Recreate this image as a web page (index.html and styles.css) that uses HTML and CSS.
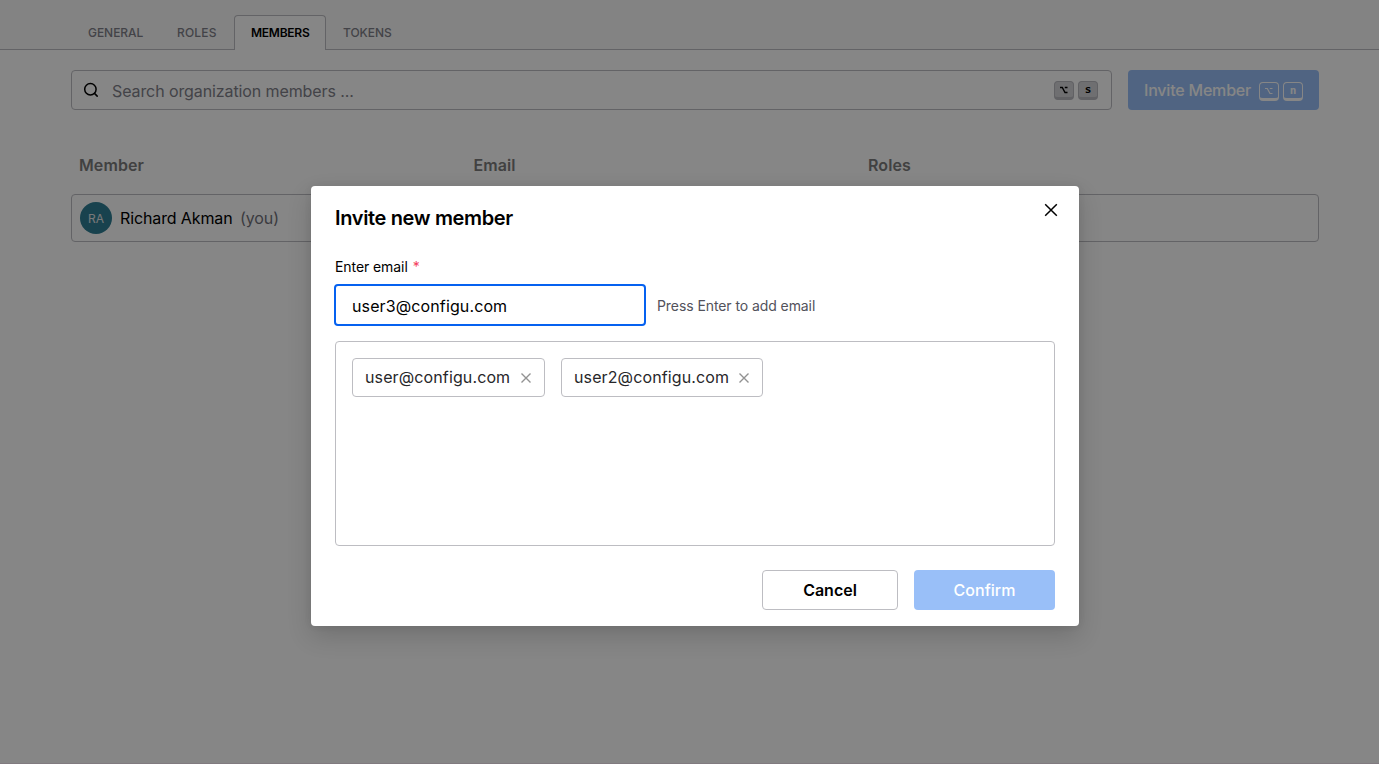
FILE: index.html
```html
<!DOCTYPE html>
<html lang="en">
<head>
  <title>Organization members</title>
  <meta charset="UTF-8">
  <meta name="viewport" content="width=device-width, initial-scale=1.0">
  <link rel="stylesheet" href="styles.css">
</head>
<body>
  <div class="page">
    <nav class="tabs">
      <a class="tab tab-general"><span>GENERAL</span></a>
      <a class="tab tab-roles"><span>ROLES</span></a>
      <a class="tab active"><span>MEMBERS</span></a>
      <a class="tab tab-tokens"><span>TOKENS</span></a>
    </nav>

    <main class="content">
      <div class="toolbar">
        <div class="search">
          <svg class="search-icon" width="16" height="16" viewBox="0 0 16 16" fill="none" stroke="#000" stroke-width="1.5" stroke-linecap="round">
            <circle cx="7.4" cy="7.2" r="5.7"/>
            <path d="M11.5 11.4L14.2 14.1"/>
          </svg>
          <span class="search-text">Search organization members ...</span>
          <kbd class="key">
            <svg width="10" height="10" viewBox="0 0 10 10" fill="none" stroke="currentColor" stroke-width="1.4"><path d="M1 2.500h2.300l2.700 5H8.500M5.800 2.500h2.700"/></svg>
          </kbd>
          <kbd class="key">s</kbd>
        </div>
        <div class="btn invite">
          <span class="invite-text">Invite Member</span>
          <kbd class="key key-light">
            <svg width="10" height="10" viewBox="0 0 10 10" fill="none" stroke="currentColor" stroke-width="1.2"><path d="M1 2.500h2.300l2.700 5H8.500M5.800 2.500h2.700"/></svg>
          </kbd>
          <kbd class="key key-light">n</kbd>
        </div>
      </div>

      <div class="table-head">
        <span>Member</span>
        <span>Email</span>
        <span>Roles</span>
      </div>
      <div class="row">
        <div class="avatar">RA</div>
        <span class="name">Richard Akman</span>
        <span class="you">(you)</span>
      </div>
    </main>
  </div>

  <div class="overlay">
    <section class="modal">
      <header class="modal-header">
        <h2>Invite new member</h2>
        <svg class="close" width="14" height="14" viewBox="0 0 14 14" fill="none" stroke="#000" stroke-width="1.5"><path d="M1.2 1.2l11.6 11.6M12.8 1.2L1.2 12.8"/></svg>
      </header>

      <div class="label"><span class="label-text">Enter email</span><span class="required">*</span></div>
      <div class="field">
        <div class="input"><span class="email">user3@configu.com</span></div>
        <span class="hint">Press Enter to add email</span>
      </div>

      <div class="chips">
        <div class="chip">
          <span class="email">user@configu.com</span>
          <svg width="10" height="10" viewBox="0 0 10 10" fill="none" stroke="#929292" stroke-width="1.4"><path d="M.5.5l9 9M9.500.5l-9 9"/></svg>
        </div>
        <div class="chip chip-wide">
          <span class="email">user2@configu.com</span>
          <svg width="10" height="10" viewBox="0 0 10 10" fill="none" stroke="#929292" stroke-width="1.4"><path d="M.5.5l9 9M9.500.5l-9 9"/></svg>
        </div>
      </div>

      <footer class="actions">
        <div class="btn cancel">Cancel</div>
        <div class="btn confirm">Confirm</div>
      </footer>
    </section>
  </div>
</body>
</html>
```

FILE: styles.css
```css
* {
  box-sizing: border-box;
}
body {
  margin: 0;
  font-family: Inter, "Liberation Sans", sans-serif;
  font-size: 16px;
  line-height: 24px;
  color: #000;
  background: #fff;
  overflow: hidden;
}
.page {
  height: 100vh;
  border-bottom: 1px solid #f4e9f1;
}
.tabs {
  display: flex;
  height: 50px;
  padding: 15px 71px 0;
  border-bottom: 1px solid #bdbdc2;
  background: #fafafa;
}
.tab {
  height: 35px;
  padding: 0 17px;
  line-height: 35px;
  font-size: 12px;
  font-weight: 500;
  letter-spacing: -0.05px;
  color: #808089;
}
.tab-general {
  width: 89px;
}
.tab-roles {
  width: 74px;
  letter-spacing: 0.2px;
}
.tab.active {
  width: 92px;
  padding: 0 16px;
  line-height: 34px;
  font-weight: 600;
  letter-spacing: -0.25px;
  color: #000;
  background: #fff;
  border: 1px solid #bdbdc2;
  border-bottom: none;
  border-radius: 4px 4px 0 0;
}
.content {
  padding: 20px 60px 0 71px;
}
.toolbar {
  display: flex;
  gap: 16px;
}
.search {
  flex: 1;
  display: flex;
  align-items: center;
  gap: 4px;
  height: 40px;
  padding: 0 13px 0 11px;
  border: 1px solid #bdbdc2;
  border-radius: 4px;
}
.search-text {
  flex: 1;
  padding: 1px 0 0 9px;
  letter-spacing: -0.1px;
  color: #808089;
}
.key {
  display: flex;
  align-items: center;
  justify-content: center;
  width: 20px;
  height: 19px;
  margin-top: 1px;
  padding-top: 1px;
  font: bold 11px/14px "DejaVu Sans Mono", monospace;
  background: #d4d4d8;
  border: 1px solid #b8b8be;
  border-bottom-width: 3px;
  border-radius: 4px;
}
.btn {
  display: flex;
  align-items: center;
  justify-content: center;
  height: 40px;
  border-radius: 4px;
  font-weight: 500;
}
.invite {
  width: 191px;
  gap: 4px;
  color: #fff;
  background: #99bff8;
}
.invite-text {
  width: 111px;
  letter-spacing: -0.2px;
}
.key-light {
  margin-top: 3px;
  background: none;
  border-color: #fff;
}
.table-head {
  display: grid;
  grid-template-columns: 394.5px 394.5px 1fr;
  padding: 0 8px;
  margin: 43px 0 17px;
  font-weight: 600;
  letter-spacing: 0.1px;
  color: #7c7c7c;
}
.row {
  display: flex;
  align-items: center;
  height: 48px;
  padding: 0 8px;
  border: 1px solid #bdbdc2;
  border-radius: 4px;
}
.avatar {
  width: 32px;
  height: 32px;
  border-radius: 50%;
  background: #2f7f94;
  color: #e4e4e7;
  font-size: 12px;
  line-height: 33px;
  text-align: center;
}
.name {
  width: 120px;
  margin-left: 8px;
  letter-spacing: -0.12px;
}
.you {
  color: #71717a;
  letter-spacing: -0.1px;
}
.overlay {
  position: absolute;
  inset: 0;
  padding-top: 186px;
  background: rgba(0, 0, 0, 0.475);
}
.modal {
  width: 768px;
  height: 440px;
  margin-left: 311px;
  padding: 16px 24px;
  background: #fff;
  border-radius: 4px;
  box-shadow: 0 10px 24px rgba(0, 0, 0, 0.16), 0 0 8px rgba(0, 0, 0, 0.06);
}
.modal-header {
  display: flex;
  justify-content: space-between;
  height: 53px;
}
h2 {
  margin: 0;
  font-size: 20px;
  line-height: 32px;
  font-weight: 600;
  letter-spacing: -0.35px;
}
.close {
  margin: 1px -3px 0 0;
}
.label {
  display: flex;
  gap: 5px;
  height: 29px;
  font-size: 14px;
  letter-spacing: -0.08px;
}
.required {
  color: #f43f5e;
}
.field {
  display: flex;
  align-items: center;
  gap: 11px;
  margin-left: -1px;
}
.input {
  width: 312px;
  height: 42px;
  padding: 0 16px;
  line-height: 40px;
  border: 2px solid #0561f0;
  border-radius: 4px;
}
.email {
  letter-spacing: 0.12px;
}
.hint {
  margin-top: 2px;
  font-size: 14px;
  letter-spacing: -0.08px;
  color: #52525b;
}
.chips {
  display: flex;
  align-items: flex-start;
  gap: 16px;
  height: 205px;
  margin-top: 15px;
  padding: 16px;
  border: 1px solid #bdbdc2;
  border-radius: 4px;
}
.chip {
  display: flex;
  align-items: center;
  justify-content: space-between;
  width: 193px;
  height: 39px;
  padding: 0 13px 0 12px;
  line-height: 22px;
  color: #27272a;
  border: 1px solid #bdbdc2;
  border-radius: 4px;
}
.chip .email {
  margin-bottom: 2px;
}
.chip-wide {
  width: 202px;
}
.actions {
  display: flex;
  justify-content: flex-end;
  gap: 16px;
  margin-top: 24px;
}
.cancel {
  width: 136px;
  border: 1px solid #bdbdc2;
  font-weight: 600;
}
.confirm {
  width: 141px;
  color: #fff;
  background: #99bff8;
}
```
